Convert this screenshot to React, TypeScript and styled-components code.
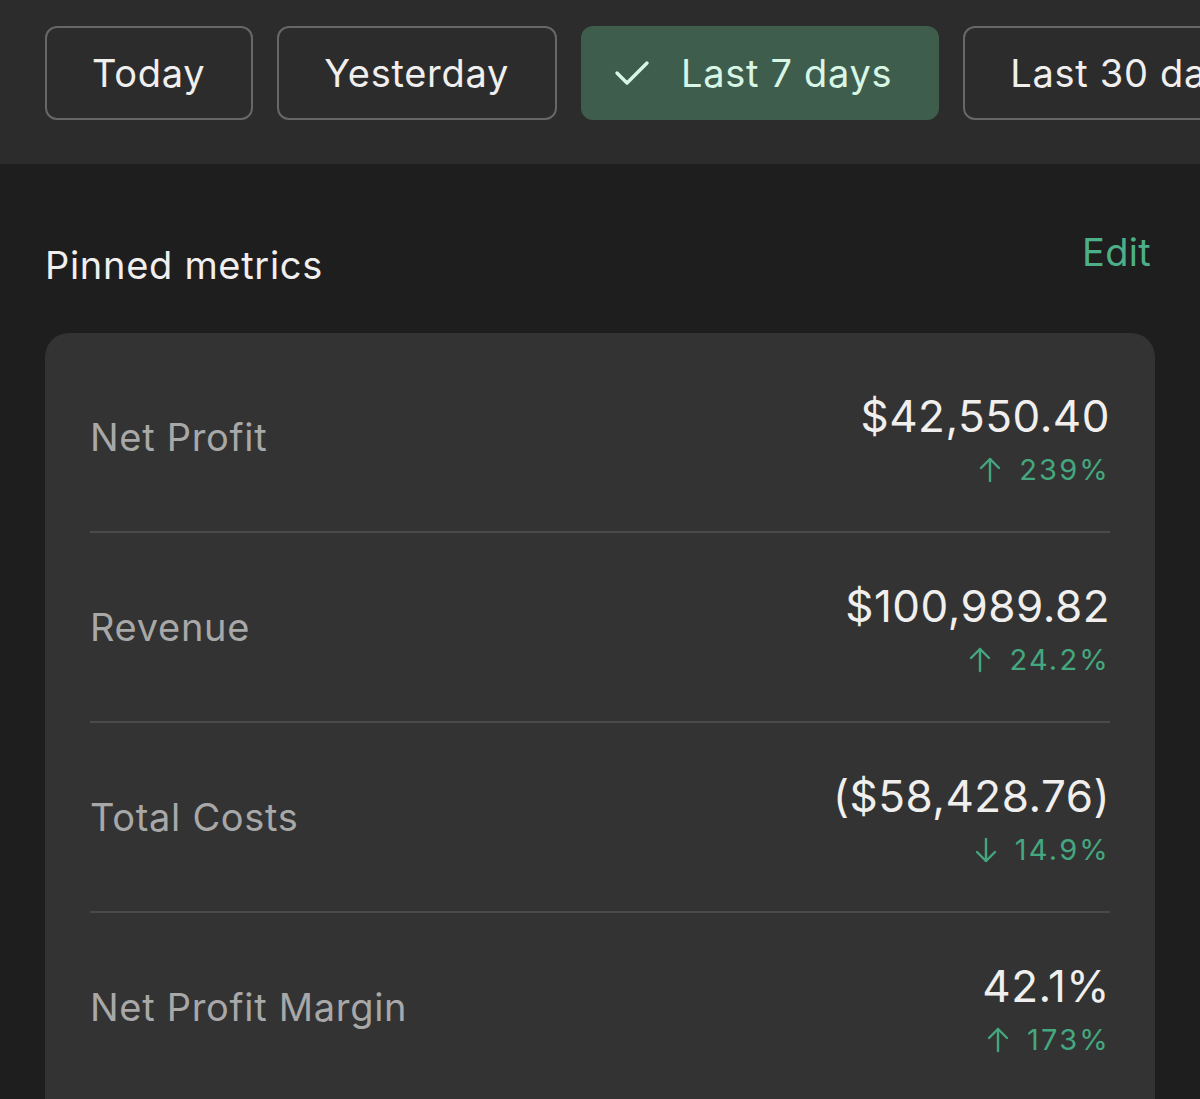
import React from "react";
import styled, { createGlobalStyle } from "styled-components";

const Global = createGlobalStyle`
  html, body { margin: 0; padding: 0; background: #1e1e1e; }
  body { font-family: Inter, "Noto Sans", sans-serif; -webkit-font-smoothing: antialiased; }
  #root { min-height: 1099px; overflow: hidden; }
`;

const TopBar = styled.div`
  background: #2c2c2c;
  height: 164px;
  box-sizing: border-box;
  padding: 26px 0 0 45px;
  display: flex;
  gap: 24px;
  overflow: hidden;
  white-space: nowrap;
`;

const Chip = styled.button<{ $active?: boolean }>`
  flex-shrink: 0;
  height: 94px;
  box-sizing: border-box;
  padding: 0 ${(p) => (p.$active ? "45px" : "46px")} 0 ${(p) => (p.$active ? "31px" : "45px")};
  border-radius: 12px;
  border: 2px solid ${(p) => (p.$active ? "#3f5d4c" : "#676767")};
  background: ${(p) => (p.$active ? "#3f5d4c" : "transparent")};
  color: ${(p) => (p.$active ? "#d8f6e6" : "#f0efee")};
  font-family: Inter, sans-serif;
  font-size: 38px;
  font-weight: 400;
  letter-spacing: 0.7px;
  display: flex;
  align-items: center;
  gap: 31px;
`;

const Main = styled.div`
  padding: 78px 45px 0;
`;

const Header = styled.div`
  display: flex;
  justify-content: space-between;
  align-items: flex-start;
  padding-right: 4px;
`;

const Title = styled.h2`
  margin: 0;
  font-size: 38px;
  line-height: 46px;
  font-weight: 400;
  color: #f0efee;
  letter-spacing: 0.7px;
`;

const EditLink = styled.a`
  margin-top: -13px;
  font-size: 38px;
  line-height: 46px;
  color: #4daf87;
  letter-spacing: 0.3px;
`;

const Card = styled.div`
  margin-top: 45px;
  background: #333333;
  border-radius: 24px;
  padding: 10px 45px 40px;
  width: 1110px;
  box-sizing: border-box;
`;

const Row = styled.div<{ $last?: boolean }>`
  height: 188px;
  display: flex;
  align-items: center;
  justify-content: space-between;
  border-bottom: 2px solid ${(p) => (p.$last ? "transparent" : "#4a4a4a")};
`;

const Label = styled.div`
  font-size: 38px;
  color: #a8a8a8;
  letter-spacing: 0.7px;
`;

const Values = styled.div`
  display: flex;
  flex-direction: column;
  align-items: flex-end;
  gap: 10px;
  margin-top: 4px;
`;

const Amount = styled.div`
  font-size: 44px;
  line-height: 52px;
  color: #f0efee;
  letter-spacing: 0.5px;
`;

const Change = styled.div`
  display: flex;
  align-items: center;
  gap: 17px;
  font-size: 29px;
  line-height: 36px;
  color: #45a77f;
  letter-spacing: 2.2px;
`;

const Arrow = ({ down }: { down?: boolean }) => (
  <svg width="24" height="28" viewBox="0 0 24 28" fill="none" stroke="#45a77f" strokeWidth="2.4" strokeLinecap="round" strokeLinejoin="round">
    {down ? (
      <>
        <path d="M12 3 V25" />
        <path d="M3 16 L12 25 L21 16" />
      </>
    ) : (
      <>
        <path d="M12 25 V3" />
        <path d="M3 12 L12 3 L21 12" />
      </>
    )}
  </svg>
);

const Check = () => (
  <svg width="36" height="28" viewBox="0 0 36 28" fill="none" stroke="#d8f6e6" strokeWidth="3.4" strokeLinecap="round" strokeLinejoin="round">
    <path d="M3 14 L13 24 L33 4" />
  </svg>
);

const metrics = [
  { label: "Net Profit", value: "$42,550.40", change: "239%", down: false },
  { label: "Revenue", value: "$100,989.82", change: "24.2%", down: false },
  { label: "Total Costs", value: "($58,428.76)", change: "14.9%", down: true },
  { label: "Net Profit Margin", value: "42.1%", change: "173%", down: false },
];

export default function App() {
  return (
    <>
      <Global />
      <TopBar>
        <Chip>Today</Chip>
        <Chip>Yesterday</Chip>
        <Chip $active>
          <Check />
          Last 7 days
        </Chip>
        <Chip>Last 30 days</Chip>
      </TopBar>
      <Main>
        <Header>
          <Title>Pinned metrics</Title>
          <EditLink>Edit</EditLink>
        </Header>
        <Card>
          {metrics.map((m, i) => (
            <Row key={m.label} $last={i === metrics.length - 1}>
              <Label>{m.label}</Label>
              <Values>
                <Amount>{m.value}</Amount>
                <Change>
                  <Arrow down={m.down} />
                  {m.change}
                </Change>
              </Values>
            </Row>
          ))}
        </Card>
      </Main>
    </>
  );
}
